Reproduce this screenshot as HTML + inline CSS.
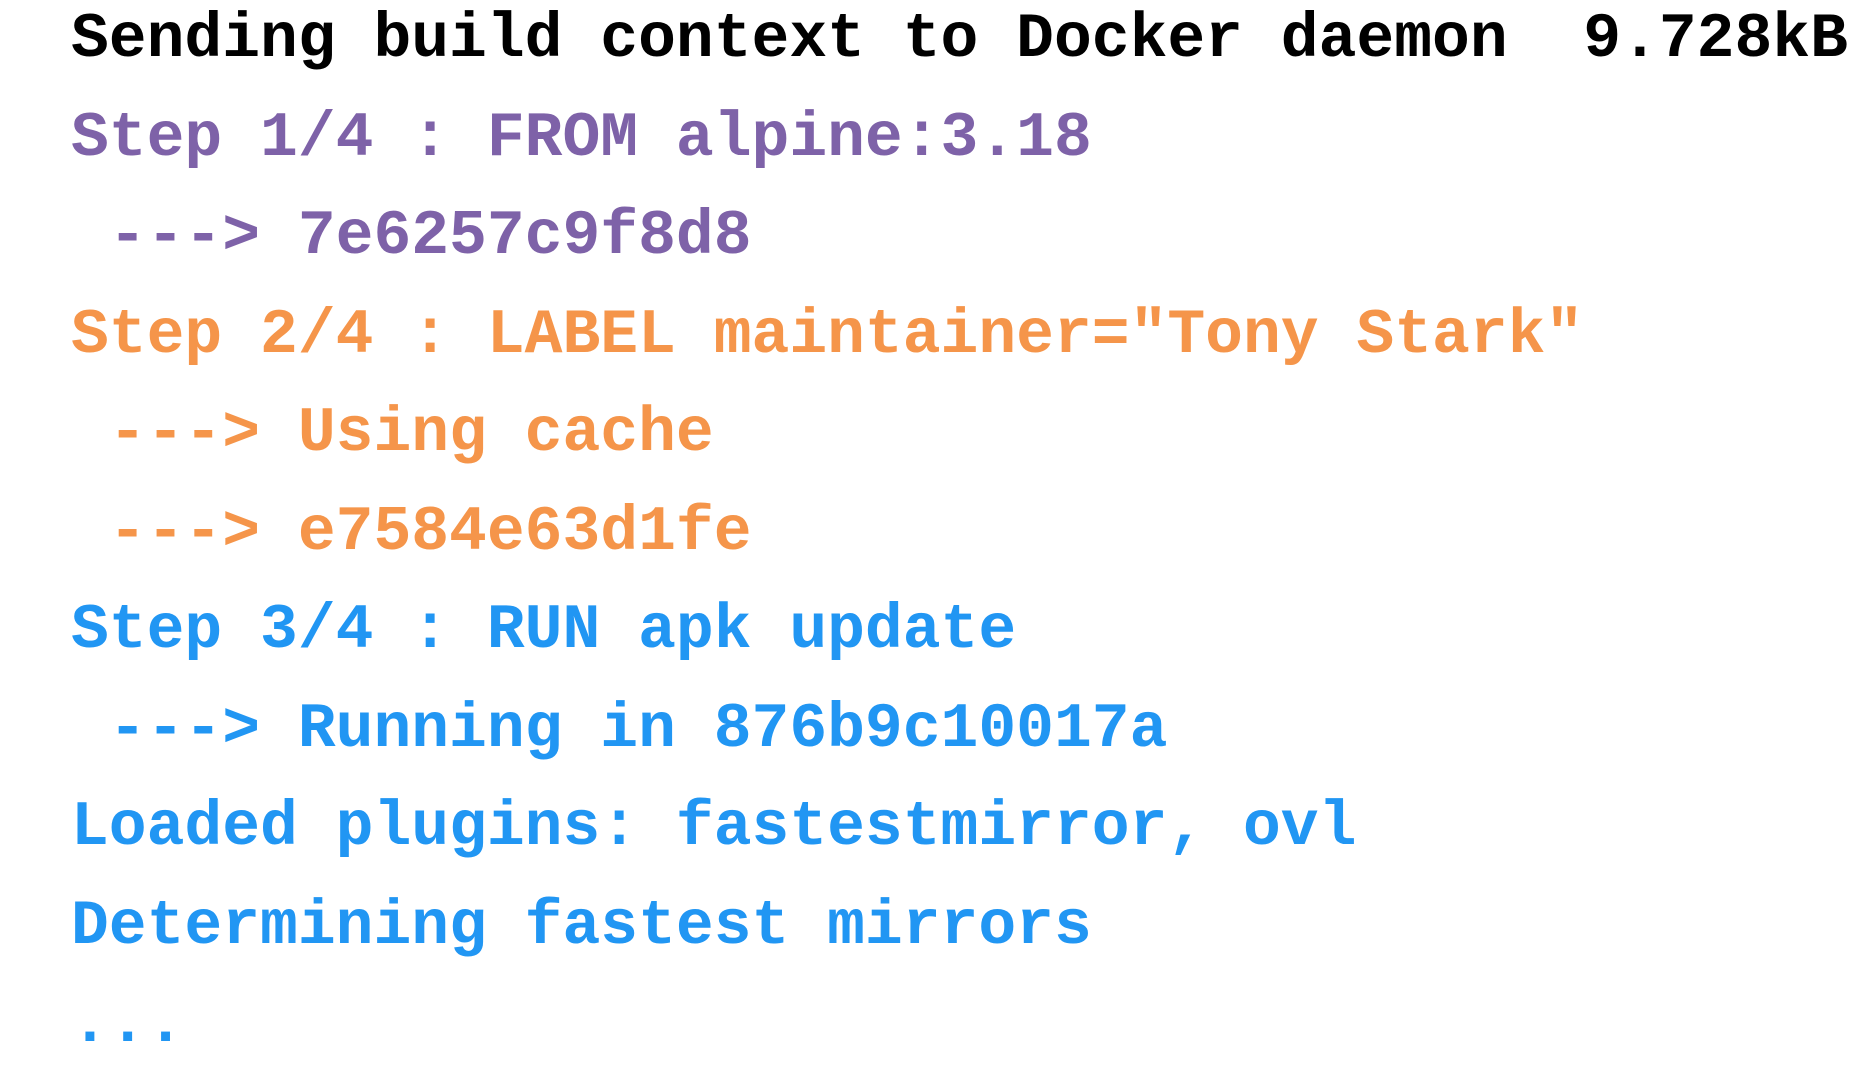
<!DOCTYPE html>
<html>
<head>
<meta charset="utf-8">
<style>
html,body{margin:0;padding:0;background:#fff;width:1860px;height:1080px;overflow:hidden;}
pre{position:absolute;left:71px;top:-9px;margin:0;font-family:"Liberation Mono",monospace;font-weight:bold;font-size:63px;line-height:98.5px;white-space:pre;}
.k{color:#000}
.p{color:#7e62a8}
.o{color:#f5954a}
.b{color:#2196f3}
</style>
</head>
<body>
<pre><span class="k">Sending build context to Docker daemon  9.728kB</span>
<span class="p">Step 1/4 : FROM alpine:3.18</span>
<span class="p"> ---&gt; 7e6257c9f8d8</span>
<span class="o">Step 2/4 : LABEL maintainer="Tony Stark"</span>
<span class="o"> ---&gt; Using cache</span>
<span class="o"> ---&gt; e7584e63d1fe</span>
<span class="b">Step 3/4 : RUN apk update</span>
<span class="b"> ---&gt; Running in 876b9c10017a</span>
<span class="b">Loaded plugins: fastestmirror, ovl</span>
<span class="b">Determining fastest mirrors</span>
<span class="b">...</span></pre>
</body>
</html>
